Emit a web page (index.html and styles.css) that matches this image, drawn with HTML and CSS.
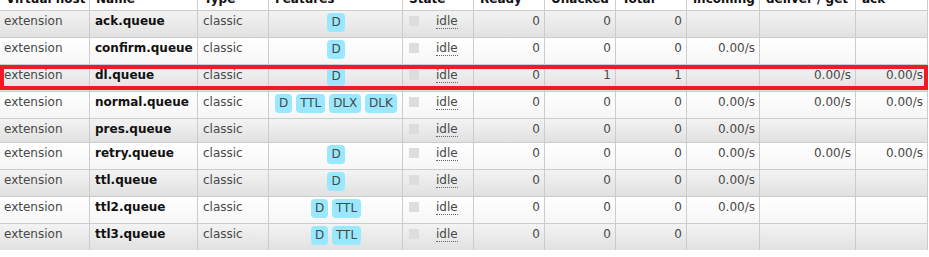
FILE: index.html
```html
<!DOCTYPE html>
<html>
<head>
<meta charset="utf-8">
<link rel="stylesheet" href="styles.css">
</head>
<body>
<div class="wrap">
<table class="list">
<thead>
<tr>
<th class="c1">Virtual host</th>
<th class="c2">Name</th>
<th class="c3">Type</th>
<th class="c4">Features</th>
<th class="c5">State</th>
<th class="c6">Ready</th>
<th class="c7">Unacked</th>
<th class="c8">Total</th>
<th class="c9">incoming</th>
<th class="c10">deliver / get</th>
<th class="c11">ack</th>
</tr>
</thead>
<tbody>
<tr class="alt1">
<td>extension</td><td class="name">ack.queue</td><td>classic</td>
<td class="feat"><span class="tag">D</span></td>
<td><span class="sq"></span><abbr class="st">idle</abbr></td>
<td class="r">0</td><td class="r">0</td><td class="r">0</td><td class="r"></td><td class="r"></td><td class="r"></td>
</tr>
<tr class="alt2">
<td>extension</td><td class="name">confirm.queue</td><td>classic</td>
<td class="feat"><span class="tag">D</span></td>
<td><span class="sq"></span><abbr class="st">idle</abbr></td>
<td class="r">0</td><td class="r">0</td><td class="r">0</td><td class="r">0.00/s</td><td class="r"></td><td class="r"></td>
</tr>
<tr class="alt1">
<td>extension</td><td class="name">dl.queue</td><td>classic</td>
<td class="feat"><span class="tag">D</span></td>
<td><span class="sq"></span><abbr class="st">idle</abbr></td>
<td class="r">0</td><td class="r">1</td><td class="r">1</td><td class="r"></td><td class="r">0.00/s</td><td class="r">0.00/s</td>
</tr>
<tr class="alt2">
<td>extension</td><td class="name">normal.queue</td><td>classic</td>
<td class="feat"><span class="tag">D</span> <span class="tag">TTL</span> <span class="tag">DLX</span> <span class="tag">DLK</span></td>
<td><span class="sq"></span><abbr class="st">idle</abbr></td>
<td class="r">0</td><td class="r">0</td><td class="r">0</td><td class="r">0.00/s</td><td class="r">0.00/s</td><td class="r">0.00/s</td>
</tr>
<tr class="alt1">
<td>extension</td><td class="name">pres.queue</td><td>classic</td>
<td class="feat"></td>
<td><span class="sq"></span><abbr class="st">idle</abbr></td>
<td class="r">0</td><td class="r">0</td><td class="r">0</td><td class="r">0.00/s</td><td class="r"></td><td class="r"></td>
</tr>
<tr class="alt2">
<td>extension</td><td class="name">retry.queue</td><td>classic</td>
<td class="feat"><span class="tag">D</span></td>
<td><span class="sq"></span><abbr class="st">idle</abbr></td>
<td class="r">0</td><td class="r">0</td><td class="r">0</td><td class="r">0.00/s</td><td class="r">0.00/s</td><td class="r">0.00/s</td>
</tr>
<tr class="alt1">
<td>extension</td><td class="name">ttl.queue</td><td>classic</td>
<td class="feat"><span class="tag">D</span></td>
<td><span class="sq"></span><abbr class="st">idle</abbr></td>
<td class="r">0</td><td class="r">0</td><td class="r">0</td><td class="r">0.00/s</td><td class="r"></td><td class="r"></td>
</tr>
<tr class="alt2">
<td>extension</td><td class="name">ttl2.queue</td><td>classic</td>
<td class="feat"><span class="tag">D</span> <span class="tag">TTL</span></td>
<td><span class="sq"></span><abbr class="st">idle</abbr></td>
<td class="r">0</td><td class="r">0</td><td class="r">0</td><td class="r">0.00/s</td><td class="r"></td><td class="r"></td>
</tr>
<tr class="alt1 last">
<td>extension</td><td class="name">ttl3.queue</td><td>classic</td>
<td class="feat"><span class="tag">D</span> <span class="tag">TTL</span></td>
<td><span class="sq"></span><abbr class="st">idle</abbr></td>
<td class="r">0</td><td class="r">0</td><td class="r">0</td><td class="r"></td><td class="r"></td><td class="r"></td>
</tr>
</tbody>
</table>
<div class="mark"></div>
</div>
</body>
</html>
```
FILE: styles.css
```css
html, body {
  margin: 0;
  padding: 0;
  background: #fff;
}
body {
  font-family: "DejaVu Sans", Verdana, sans-serif;
  font-size: 12px;
  line-height: 16px;
  color: #484848;
}
.wrap {
  position: relative;
  width: 929px;
  height: 257px;
  overflow: hidden;
}
table.list {
  table-layout: fixed;
  width: 928px;
  border-collapse: separate;
  border-spacing: 0;
  margin-top: -14px;
}
table.list th,
table.list td {
  box-sizing: border-box;
  border-right: 1px solid #cccccc;
  border-bottom: 1px solid #cccccc;
  vertical-align: top;
  text-align: left;
  overflow: hidden;
  white-space: nowrap;
}
table.list th {
  padding: 5px 5px 3px 6px;
  font-weight: bold;
  color: #111;
  background: #fff;
}
table.list td {
  padding: 2px 4px 5px 5px;
}
table.list td:first-child {
  padding-left: 4px;
}
.c1 { width: 90px; }
.c2 { width: 108px; }
.c3 { width: 71px; }
.c4 { width: 134px; }
.c5 { width: 71px; }
.c6 { width: 71px; }
.c7 { width: 71px; }
.c8 { width: 71px; }
.c9 { width: 73px; }
.c10 { width: 96px; }
.c11 { width: 72px; }

table.list tr.alt1 td {
  background: linear-gradient(#f3f3f3, #e1e1e1);
}
table.list tr.alt2 td {
  background: linear-gradient(#ffffff, #f6f6f6);
}
table.list tr.last td {
  border-bottom: none;
  height: 24px;
}
table.list td.name {
  font-weight: bold;
  color: #111;
}
table.list td.r {
  text-align: right;
}
table.list td.feat {
  text-align: center;
}
.tag {
  display: inline-block;
  vertical-align: top;
  padding: 2px 4px;
  line-height: 15px;
  background: #99e8ff;
  border-radius: 4px;
  color: #484848;
}
.sq {
  display: inline-block;
  width: 10px;
  height: 10px;
  background: #dddddd;
  vertical-align: -1px;
  margin-left: 1px;
  margin-right: 17px;
}
abbr.st {
  text-decoration: none;
  border-bottom: 1px dotted #666;
}
.mark {
  position: absolute;
  left: 0;
  top: 65px;
  width: 928px;
  height: 25px;
  box-sizing: border-box;
  border: 4px solid #ed1c24;
}
```
